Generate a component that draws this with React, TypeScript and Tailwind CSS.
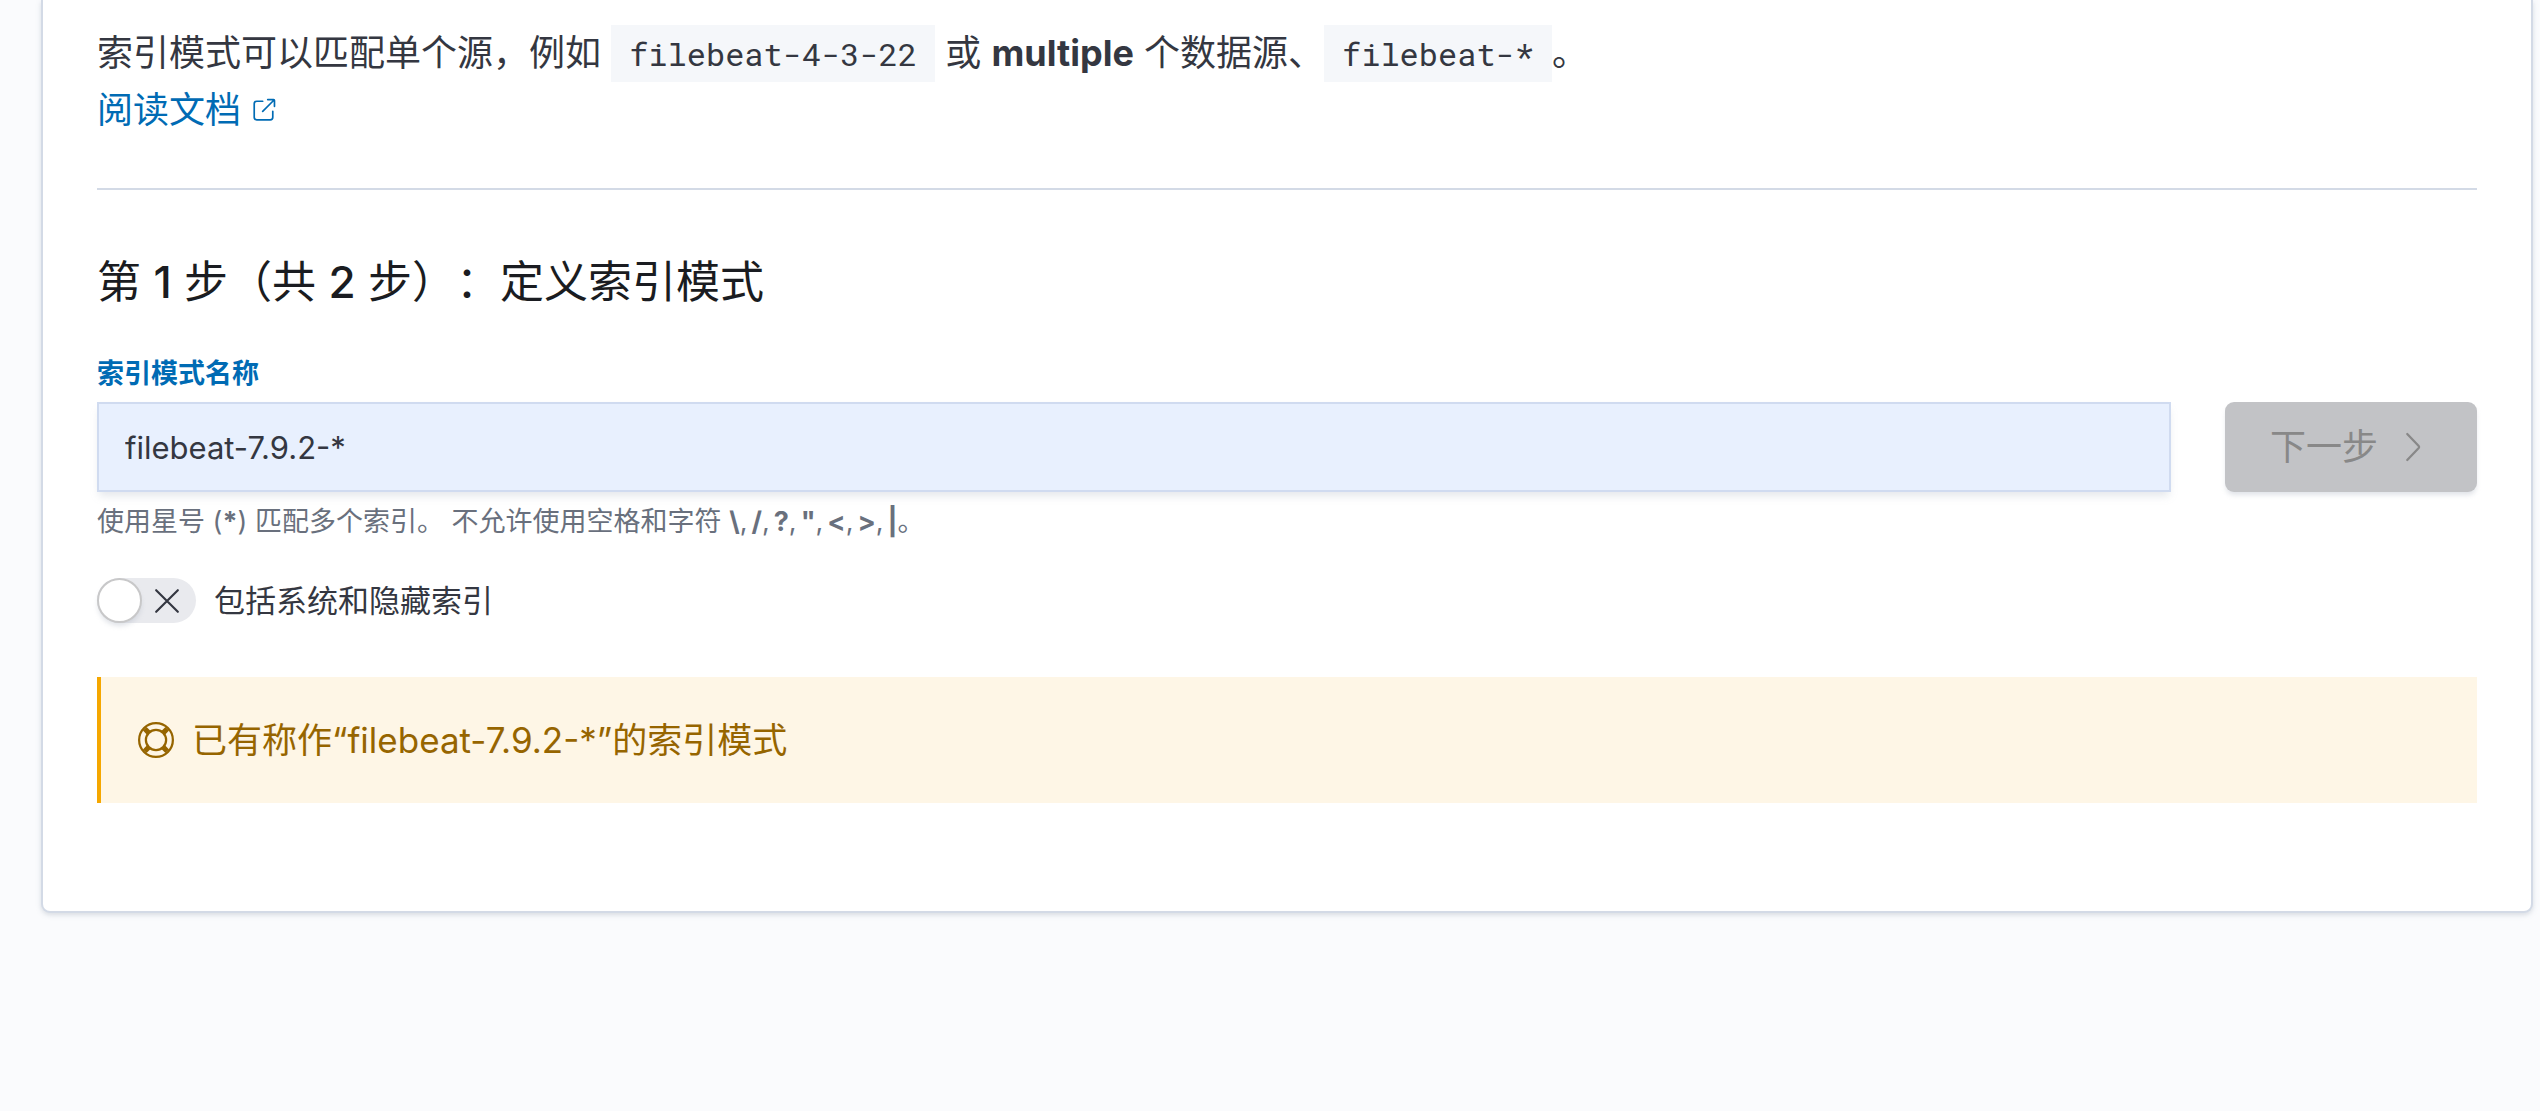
import { useState } from 'react';

function PopoutIcon() {
  return (
    <svg className="size-[27px]" viewBox="0 0 16 16" fill="currentColor" aria-hidden="true">
      <path d="M13 8.5a.5.5 0 111 0V12a2 2 0 01-2 2H4a2 2 0 01-2-2V4a2 2 0 012-2h3.5a.5.5 0 010 1H4a1 1 0 00-1 1v8a1 1 0 001 1h8a1 1 0 001-1V8.5zm-5.12.339a.5.5 0 11-.706-.707L13.305 2H10.5a.5.5 0 110-1H14a1 1 0 011 1v3.5a.5.5 0 11-1 0V2.72L7.88 8.838z" />
    </svg>
  );
}

function HelpIcon() {
  return (
    <svg className="size-9" viewBox="0 0 16 16" fill="none" stroke="currentColor" aria-hidden="true">
      <circle cx="8" cy="8" r="7.5" />
      <circle cx="8" cy="8" r="4.5" />
      <path
        strokeWidth="2.3"
        d="M3 3l1.8 1.8M13 3l-1.8 1.8M3 13l1.8-1.8M13 13l-1.8-1.8"
      />
    </svg>
  );
}

function ArrowRightIcon() {
  return (
    <svg className="size-9" viewBox="0 0 16 16" fill="none" stroke="currentColor" strokeLinecap="round" strokeLinejoin="round" aria-hidden="true">
      <path d="M5 2.2l5.1 5.4a.6.6 0 010 .8l-5.1 5.4" />
    </svg>
  );
}

function CrossIcon() {
  return (
    <svg className="size-[26px]" viewBox="0 0 12 12" fill="none" stroke="currentColor" strokeLinecap="round" aria-hidden="true">
      <path d="M1 1l10 10M11 1L1 11" />
    </svg>
  );
}

function Code({ children }: { children: string }) {
  return (
    <code className="bg-[#f5f7fa] px-[18px] py-[7px] font-['Roboto_Mono','Liberation_Mono',monospace] text-[32px]">
      {children}
    </code>
  );
}

const FORBIDDEN = ['\\', '/', '?', '"', '<', '>', '|'];

export default function App() {
  const [pattern, setPattern] = useState('filebeat-7.9.2-*');
  const [includeHidden, setIncludeHidden] = useState(false);

  return (
    <div className="min-h-screen bg-[#fafbfd] pr-[7px] pl-[41px] font-[Inter,'Noto_Sans_CJK_SC',sans-serif] text-[#343741] [text-spacing-trim:space-all]">
      <main className="rounded-b-[9px] border-2 border-t-0 border-[#d3dae6] bg-white px-[54px] pt-[25px] pb-[108px] shadow-[0_2px_5px_rgba(152,162,179,0.35)]">
        <p className="text-4xl leading-[56px]">
          索引模式可以匹配单个源，例如 <Code>filebeat-4-3-22</Code> 或 <strong className="font-bold">multiple</strong> 个数据源、<Code>filebeat-*</Code>。
          <br />
          <a href="#docs" className="inline-flex items-center gap-[9px] text-[#006bb4]">
            阅读文档
            <PopoutIcon />
          </a>
        </p>

        <hr className="mt-[50px] border-t-2 border-[#d3dae6]" />

        <h2 className="mt-[60px] text-[44px] leading-[64px] text-[#1a1c21]">
          第 <span className="font-medium">1</span> 步（共 <span className="font-medium">2</span> 步）：定义索引模式
        </h2>

        <form className="mt-10" onSubmit={(event) => event.preventDefault()}>
          <div className="flex gap-[54px]">
            <div className="flex-1">
              <label htmlFor="pattern-name" className="block text-[27px] leading-10 font-bold text-[#006bb4]">
                索引模式名称
              </label>
              <input
                id="pattern-name"
                type="text"
                value={pattern}
                onChange={(event) => setPattern(event.target.value)}
                className="mt-2 block h-[90px] w-full border-2 border-[#d0dbf0] bg-[#e8f0fe] px-[26px] text-[31px] shadow-[0_6px_8px_-2px_rgba(152,162,179,0.25)] outline-none"
              />
              <p className="mt-[10px] text-[27px] leading-10 text-[#69707d]">
                使用星号 (<strong>*</strong>) 匹配多个索引。 不允许使用空格和字符{' '}
                <span className="inline-flex gap-1">
                  {FORBIDDEN.map((char, index) => (
                    <span key={char}>
                      <strong>{char}</strong>
                      {index < FORBIDDEN.length - 1 ? ', ' : '。'}
                    </span>
                  ))}
                </span>
              </p>
            </div>
            <button
              type="submit"
              disabled
              className="mt-12 flex h-[90px] w-[252px] items-center justify-center gap-[18px] rounded-[9px] bg-[#c2c3c6] text-4xl text-[#888888] shadow-[0_4px_5px_-1px_rgba(152,162,179,0.3)]"
            >
              下一步
              <ArrowRightIcon />
            </button>
          </div>

          <div className="mt-9 flex items-center gap-[18px]">
            <button
              id="include-hidden"
              type="button"
              role="switch"
              aria-checked={includeHidden}
              onClick={() => setIncludeHidden(!includeHidden)}
              className="flex h-[45px] w-[99px] items-center rounded-full bg-[#e9eaee]"
            >
              <span className="size-[45px] rounded-full border-2 border-[#c8c8c9] bg-white shadow-[0_4px_5px_-1px_rgba(152,162,179,0.3)]" />
              <span className="flex flex-1 justify-center pr-1">
                <CrossIcon />
              </span>
            </button>
            <label htmlFor="include-hidden" className="text-[31px] leading-[45px]">
              包括系统和隐藏索引
            </label>
          </div>
        </form>

        <div className="mt-[54px] flex items-center gap-[18px] border-l-4 border-[#f5a700] bg-[#fef6e6] px-[37px] py-9 text-[#966500]">
          <HelpIcon />
          <span className="text-[35px] leading-[54px]">已有称作“filebeat-7.9.2-*”的索引模式</span>
        </div>
      </main>
    </div>
  );
}
